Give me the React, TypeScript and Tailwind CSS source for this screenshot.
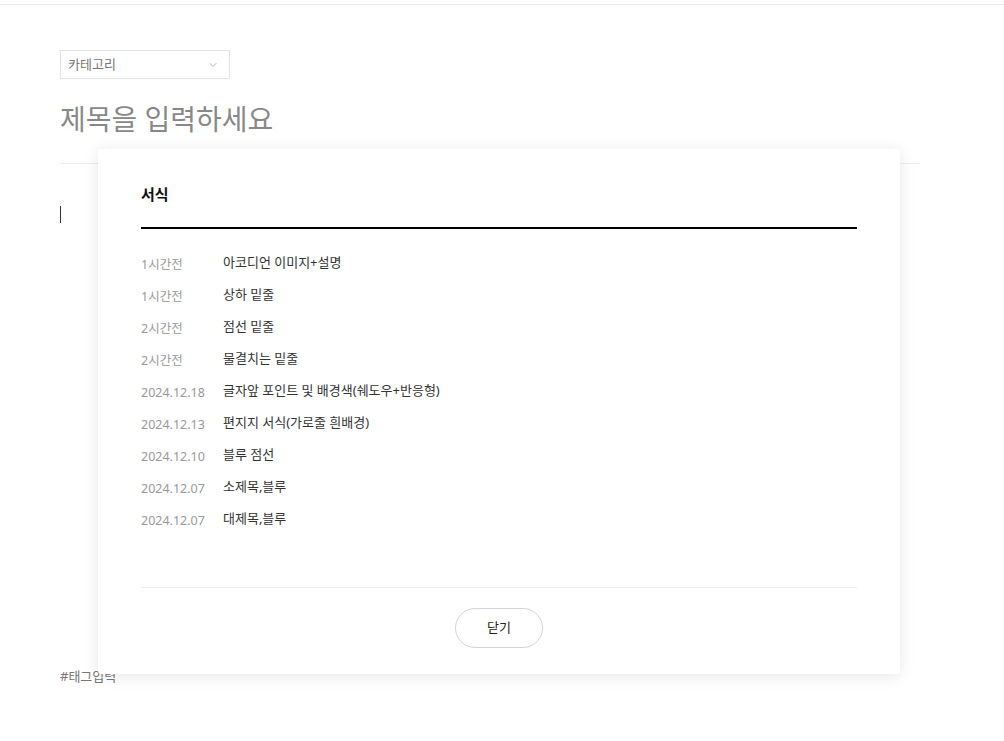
import { ChevronDown } from "lucide-react";

const TEMPLATES = [
  { date: "1시간전", title: "아코디언 이미지+설명" },
  { date: "1시간전", title: "상하 밑줄" },
  { date: "2시간전", title: "점선 밑줄" },
  { date: "2시간전", title: "물결치는 밑줄" },
  { date: "2024.12.18", title: "글자앞 포인트 및 배경색(쉐도우+반응형)" },
  { date: "2024.12.13", title: "편지지 서식(가로줄 흰배경)" },
  { date: "2024.12.10", title: "블루 점선" },
  { date: "2024.12.07", title: "소제목,블루" },
  { date: "2024.12.07", title: "대제목,블루" },
];

export default function App() {
  return (
    <div
      className="relative min-h-[741px] bg-white"
      style={{ fontFamily: '"Noto Sans", "Noto Sans CJK KR", sans-serif' }}
    >
      <div className="h-[5px] border-b border-[#ebebeb]" />

      <div className="px-[60px] pt-[45px] w-[920px]">
        <button
          type="button"
          className="flex h-[29px] w-[170px] items-center justify-between border border-[#e3e3e3] pl-[7px] pr-[10px] text-[13px] text-[#777]"
        >
          <span>카테고리</span>
          <ChevronDown size={12} strokeWidth={1.5} className="text-[#999]" />
        </button>

        <div className="mt-[20px] text-[28px] leading-[40px] text-[#888]">제목을 입력하세요</div>

        <div className="mt-[24px] h-px w-[860px] bg-[#ededed]" />

        <div className="mt-[42px] h-[17px] w-px bg-[#333]" />

        <div className="mt-[444px] text-[13px] text-[#777]">#태그입력</div>
      </div>

      {/* template dialog */}
      <div className="absolute left-[98px] top-[149px] w-[802px] rounded-[3px] bg-white px-[43px] pb-[26px] pt-[34px] shadow-[0_2px_16px_rgba(0,0,0,0.1)]">
        <h2 className="text-[15px] font-bold leading-[22px] text-[#111]">서식</h2>
        <div className="mt-[22px] h-[2px] bg-black" />

        <ul className="mt-[18px] flex flex-col pb-[52px]">
          {TEMPLATES.map((t, i) => (
            <li key={i} className="flex h-[32px] items-center text-[13px]">
              <span className="w-[82px] pt-[4px] text-[12.5px] text-[#999]">{t.date}</span>
              <span className="text-[#333]">{t.title}</span>
            </li>
          ))}
        </ul>

        <div className="h-px bg-[#ececec]" />

        <div className="mt-[20px] flex justify-center">
          <button
            type="button"
            className="h-[40px] w-[88px] rounded-full border border-[#d5d5d5] text-[13px] text-[#222]"
          >
            닫기
          </button>
        </div>
      </div>
    </div>
  );
}
